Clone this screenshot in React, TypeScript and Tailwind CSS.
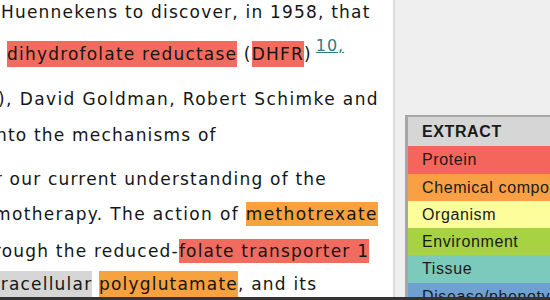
const red = "bg-[#f26b5f]";

export default function App() {
  return (
    <div className="flex h-[300px] w-[550px] flex-col overflow-hidden bg-white">
      <div className="flex min-h-0 flex-1">
        {/* article text, scrolled so the left edge clips words */}
        <article className="w-[393px] shrink-0 overflow-hidden whitespace-nowrap font-['DejaVu_Sans',Verdana,sans-serif] text-[17px] leading-[24px] tracking-[1.2px] text-[#151515]">
          <p className="ml-[1px]">Huennekens to discover, in 1958, that</p>
          <p className="mt-[18px] ml-[7px]">
            <span className={`${red} py-[3px]`}>dihydrofolate reductase</span> (
            <span className={`${red} py-[3px]`}>DHFR</span>)
            <a className="ml-[4px] align-[9px] text-[16px] leading-[0px] tracking-[1px] text-[#2f7d7d] underline">10,</a>
          </p>
          <p className="-ml-[2px] mt-[21px] tracking-[1.4px]">), David Goldman, Robert Schimke and</p>
          <p className="-ml-[10px] mt-[12px]">into the mechanisms of</p>
          <p className="-ml-[24px] mt-[20px]">for our current understanding of the</p>
          <p className="-ml-[6px] mt-[11px] tracking-[1.35px]">
            motherapy. The action of{" "}
            <span className="bg-[#f7a13f] py-[2px]">methotrexate</span>
          </p>
          <p className="-ml-[26px] mt-[13px]">
            through the reduced-
            <span className={`${red} py-[2px]`}>folate transporter 1</span>
          </p>
          <p className="-ml-[25px] mt-[9px]">
            <span className="bg-[#d6d6d6] py-[3px]">intracellular</span>{" "}
            <span className="bg-[#f7a13f] py-[3px]">polyglutamate</span>, and its
          </p>
        </article>

        {/* annotation sidebar */}
        <aside className="min-w-0 flex-1 overflow-hidden border-l-2 border-[#dcdcdc] bg-[#efefef] pl-[10px] pt-[115px] font-['Liberation_Sans',Arial,sans-serif] text-[16px] tracking-[0.6px] text-[#1a1a1a]">
          <div className="w-[220px] border-2 border-l-[3px] border-[#a6a6a6]">
            <div className="flex h-[29px] items-center bg-[#d6d6d6] pl-[14px] font-bold">EXTRACT</div>
            <div className="flex h-[28px] items-center bg-[#f4665b] pl-[14px]">Protein</div>
            <div className="flex h-[27px] items-center bg-[#f8a043] pl-[14px]">Chemical compound</div>
            <div className="flex h-[27px] items-center bg-[#fdfd9c] pl-[14px]">Organism</div>
            <div className="flex h-[27px] items-center bg-[#a7d241] pl-[14px]">Environment</div>
            <div className="flex h-[28px] items-center bg-[#7bcabb] pl-[14px]">Tissue</div>
            <div className="flex h-[27px] items-center bg-[#6fa0d2] pl-[14px]">Disease/phenotype</div>
          </div>
        </aside>
      </div>
      <div className="h-[3px] bg-[#333333]" />
    </div>
  );
}
